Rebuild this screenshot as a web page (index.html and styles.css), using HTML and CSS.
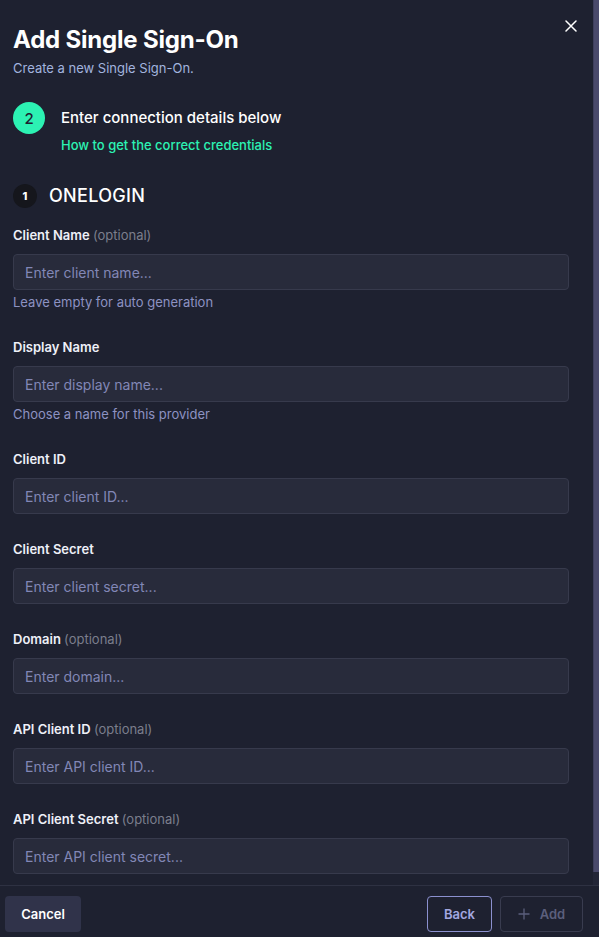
FILE: index.html
```html
<!DOCTYPE html>
<html>
<head>
<meta charset="utf-8">
<link rel="stylesheet" href="styles.css">
</head>
<body>
<div class="modal">
  <div class="scroll-row">
    <div class="content">
      <div class="header">
        <div class="titles">
          <h1 class="title">Add Single Sign-On</h1>
          <p class="subtitle">Create a new Single Sign-On.</p>
        </div>
        <button class="close" aria-label="Close">
          <svg width="12" height="12" viewBox="0 0 12 12"><path d="M1 1L11 11M11 1L1 11" stroke="#ffffff" stroke-width="1.5" stroke-linecap="round"/></svg>
        </button>
      </div>

      <div class="step">
        <div class="step-num">2</div>
        <div class="step-text">
          <div class="step-title">Enter connection details below</div>
          <a class="step-link" href="#">How to get the correct credentials</a>
        </div>
      </div>

      <div class="provider">
        <div class="provider-badge">1</div>
        <div class="provider-name">ONELOGIN</div>
      </div>

      <div class="fields">
        <div class="field">
          <label class="label">Client Name <span class="opt">(optional)</span></label>
          <input class="input" placeholder="Enter client name...">
          <div class="help">Leave empty for auto generation</div>
        </div>
        <div class="field">
          <label class="label">Display Name</label>
          <input class="input" placeholder="Enter display name...">
          <div class="help">Choose a name for this provider</div>
        </div>
        <div class="field">
          <label class="label">Client ID</label>
          <input class="input" placeholder="Enter client ID...">
        </div>
        <div class="field">
          <label class="label">Client Secret</label>
          <input class="input" placeholder="Enter client secret...">
        </div>
        <div class="field">
          <label class="label">Domain <span class="opt">(optional)</span></label>
          <input class="input" placeholder="Enter domain...">
        </div>
        <div class="field">
          <label class="label">API Client ID <span class="opt">(optional)</span></label>
          <input class="input" placeholder="Enter API client ID...">
        </div>
        <div class="field">
          <label class="label">API Client Secret <span class="opt">(optional)</span></label>
          <input class="input" placeholder="Enter API client secret...">
        </div>
      </div>
    </div>
    <div class="scrollbar"><div class="thumb"></div></div>
  </div>
  <div class="footer">
    <button class="btn btn-cancel">Cancel</button>
    <div class="footer-right">
      <button class="btn btn-back">Back</button>
      <button class="btn btn-add"><svg width="12" height="12" viewBox="0 0 12 12"><path d="M6 0.5V11.5M0.5 6H11.5" stroke="currentColor" stroke-width="1.3"/></svg><span>Add</span></button>
    </div>
  </div>
</div>
</body>
</html>
```

FILE: styles.css
```css
* { box-sizing: border-box; }
html, body { margin: 0; padding: 0; }
body {
  background: #1e2130;
  font-family: Inter, "Noto Sans", sans-serif;
  color: #ffffff;
  width: 599px;
  height: 937px;
  overflow: hidden;
}
.modal {
  display: flex;
  flex-direction: column;
  height: 937px;
}
.scroll-row {
  display: flex;
  height: 886px;
  border-bottom: 1px solid #2e3142;
}
.content {
  flex: 1;
  padding: 0 24px 0 13px;
  overflow: hidden;
}
.scrollbar {
  width: 6px;
  background: #232637;
  display: flex;
  flex-direction: column;
}
.thumb {
  height: 872px;
  background: #4a4a6b;
  border-left: 1px solid #3e3e5c;
}
.header {
  display: flex;
  justify-content: space-between;
  align-items: flex-start;
  padding-top: 26px;
}
.title {
  margin: 0;
  font-size: 24px;
  line-height: 28px;
  font-weight: 700;
  letter-spacing: -0.2px;
}
.subtitle {
  margin: 6px 0 0;
  font-size: 13px;
  line-height: 16px;
  color: #a2b4df;
}
.close {
  background: none;
  border: none;
  padding: 0;
  margin: -6px -8px 0 0;
  width: 12px;
  height: 12px;
  display: flex;
  cursor: pointer;
}
.step {
  display: flex;
  gap: 16px;
  margin-top: 26px;
}
.step-num {
  width: 32px;
  height: 32px;
  border-radius: 50%;
  background: #2cf2b3;
  color: #1e2130;
  font-size: 15px;
  font-weight: 500;
  display: flex;
  align-items: center;
  justify-content: center;
  flex-shrink: 0;
}
.step-text { display: flex; flex-direction: column; }
.step-title {
  font-size: 15px;
  line-height: 32px;
  font-weight: 500;
}
.step-link {
  font-size: 13px;
  line-height: 18px;
  font-weight: 500;
  color: #2cf2b3;
  text-decoration: none;
  margin-top: 2px;
}
.provider {
  display: flex;
  align-items: center;
  gap: 12px;
  margin-top: 30px;
}
.provider-badge {
  width: 24px;
  height: 24px;
  border-radius: 50%;
  background: #15161c;
  color: #ffffff;
  font-size: 11px;
  font-weight: 800;
  display: flex;
  align-items: center;
  justify-content: center;
}
.provider-name {
  font-size: 18px;
  line-height: 24px;
  font-weight: 500;
  letter-spacing: 0.3px;
}
.fields {
  display: flex;
  flex-direction: column;
  gap: 26px;
  margin-top: 18px;
}
.field { display: flex; flex-direction: column; }
.label {
  font-size: 13px;
  line-height: 18px;
  font-weight: 600;
  color: #eef0f8;
  margin-bottom: 10px;
}
.opt { font-weight: 400; color: #7b7e8c; }
.input {
  height: 36px;
  background: #282b3b;
  border: 1px solid #373a4c;
  border-radius: 4px;
  padding: 0 11px;
  font-family: inherit;
  font-size: 14px;
  color: #ffffff;
  outline: none;
}
.input::placeholder { color: #8287b6; }
.help {
  margin-top: 2px;
  font-size: 13px;
  line-height: 20px;
  color: #8d92c2;
}
.footer {
  flex: 1;
  display: flex;
  justify-content: space-between;
  align-items: flex-start;
  padding: 10px 16px 0 5px;
}
.footer-right { display: flex; gap: 8px; }
.btn {
  height: 36px;
  border-radius: 4px;
  font-family: inherit;
  font-size: 13px;
  font-weight: 600;
  display: flex;
  align-items: center;
  justify-content: center;
  gap: 10px;
  cursor: pointer;
}
.btn-cancel {
  width: 76px;
  background: #30334a;
  border: none;
  color: #ffffff;
}
.btn-back {
  width: 65px;
  background: transparent;
  border: 1px solid #8b90cf;
  color: #a3a8e0;
}
.btn-add {
  width: 83px;
  background: transparent;
  border: 1px solid #393c4f;
  color: #5b5f7c;
}
```
